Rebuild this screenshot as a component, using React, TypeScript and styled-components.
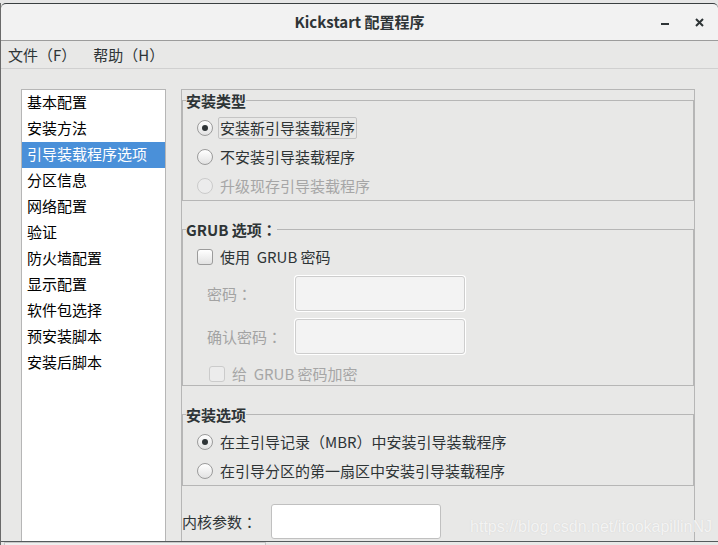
import React from "react";
import styled, { createGlobalStyle } from "styled-components";

const GlobalStyle = createGlobalStyle`
  html, body {
    margin: 0;
    padding: 0;
    background: #e6e6e6;
  }
  body {
    font-family: "Noto Sans CJK SC", "Noto Sans", sans-serif;
    font-size: 15px;
    color: #2e3436;
  }
`;

const Window = styled.div`
  position: relative;
  width: 718px;
  height: 542px;
  margin-top: 3px;
  display: flex;
  flex-direction: column;
  border-left: 1px solid #6a6a6a;
  box-sizing: border-box;
  background: #e8e8e7;
  overflow: hidden;
`;

const TitleBar = styled.div`
  height: 36px;
  display: grid;
  grid-template-columns: 1fr auto 1fr;
  align-items: center;
  background: #f2f2f2;
  border-top: 1px solid #3a3f41;
  border-bottom: 1px solid #9c9c9c;
  border-radius: 5px 5px 0 0;
  flex: none;
`;

const Title = styled.div`
  grid-column: 2;
  font-weight: 700;
  font-size: 15px;
  color: #2e3436;
  line-height: 20px;
`;

const WindowButtons = styled.div`
  grid-column: 3;
  display: flex;
  justify-content: flex-end;
  align-items: center;
  gap: 26px;
  padding-right: 14px;
`;

const MenuBar = styled.div`
  height: 27px;
  display: flex;
  align-items: center;
  gap: 17px;
  padding-left: 7px;
  border-bottom: 1px solid #d0d0d0;
  flex: none;
`;

const MenuItem = styled.span`
  font-size: 15px;
  color: #2e3436;
`;

const Body = styled.div`
  flex: 1;
  display: flex;
  gap: 15px;
  padding: 20px 0 0 20px;
  min-height: 0;
  overflow: hidden;
`;

const NavList = styled.ul`
  list-style: none;
  margin: 0;
  padding: 0;
  width: 145px;
  box-sizing: border-box;
  background: #ffffff;
  border: 1px solid #b6b6b6;
  border-bottom: none;
  flex: none;
`;

const NavItem = styled.li<{ $selected?: boolean }>`
  height: 26px;
  line-height: 24px;
  padding-left: 5px;
  font-size: 15px;
  white-space: nowrap;
  color: ${(p) => (p.$selected ? "#ffffff" : "#000000")};
  background: ${(p) => (p.$selected ? "#4a90d9" : "transparent")};
`;

const Panel = styled.div`
  width: 514px;
  box-sizing: border-box;
  border: 1px solid #b6b6b6;
  border-bottom: none;
  display: flex;
  flex-direction: column;
  flex: none;
`;

const Frame = styled.fieldset<{ $gap?: number; $pad?: number }>`
  margin: ${(p) => p.$gap ?? 0}px 0 0 0;
  padding: ${(p) => p.$pad ?? 2}px 0 0 0;
  border: 1px solid #b6b6b6;
  min-inline-size: 0;
`;

const Legend = styled.legend`
  margin-left: 3px;
  padding: 0;
  font-weight: 700;
  font-size: 15px;
  line-height: 21px;
  color: #2e3436;
`;

/* full-width colon drawn centred, as in the original GTK font */
const Colon = styled.span`
  font-family: "Noto Sans CJK TC", "Noto Sans CJK SC", sans-serif;
`;

const OptionRow = styled.label<{ $height?: number; $indent?: number }>`
  display: flex;
  align-items: center;
  gap: 5px;
  height: ${(p) => p.$height ?? 29}px;
  padding-left: ${(p) => p.$indent ?? 14}px;
`;

const Radio = styled.span<{ $checked?: boolean; $disabled?: boolean }>`
  width: 16px;
  height: 16px;
  box-sizing: border-box;
  border-radius: 50%;
  flex: none;
  display: flex;
  align-items: center;
  justify-content: center;
  border: 1px solid ${(p) => (p.$disabled ? "#cbcbcb" : "#9b9b9b")};
  background: ${(p) =>
    p.$disabled ? "#ececec" : "linear-gradient(#ffffff, #e2e2e2)"};

  &::after {
    content: "";
    width: 6px;
    height: 6px;
    border-radius: 50%;
    background: #2e3436;
    display: ${(p) => (p.$checked ? "block" : "none")};
  }
`;

const Check = styled.span<{ $disabled?: boolean }>`
  width: 16px;
  height: 16px;
  box-sizing: border-box;
  border-radius: 3px;
  flex: none;
  border: 1px solid ${(p) => (p.$disabled ? "#cbcbcb" : "#9b9b9b")};
  background: ${(p) =>
    p.$disabled ? "#ececec" : "linear-gradient(#ffffff, #e2e2e2)"};
`;

const OptionText = styled.span<{ $focused?: boolean; $disabled?: boolean }>`
  padding: 0 1px;
  height: 20px;
  line-height: 20px;
  border: 1px solid ${(p) => (p.$focused ? "#c4c4c4" : "transparent")};
  border-radius: 2px;
  white-space: pre;
  font-size: 15px;
  color: ${(p) => (p.$disabled ? "#a6a6a6" : "#2e3436")};
`;

const FieldGrid = styled.div`
  display: grid;
  grid-template-columns: 88px 170px;
  row-gap: 8px;
  align-items: center;
  padding-left: 24px;
  margin: 5px 0 8px;
`;

const FieldLabel = styled.span<{ $disabled?: boolean }>`
  font-size: 15px;
  color: ${(p) => (p.$disabled ? "#a3a3a3" : "#2e3436")};
`;

const TextBox = styled.div<{ $disabled?: boolean }>`
  width: 170px;
  height: 35px;
  box-sizing: border-box;
  border-radius: 3px;
  border: 1px solid ${(p) => (p.$disabled ? "#cdcdcd" : "#c0c0c0")};
  background: ${(p) => (p.$disabled ? "#f3f3f3" : "#ffffff")};
  box-shadow: ${(p) => (p.$disabled ? "0 0 0 1px #ffffff" : "none")};
`;

const KernelRow = styled.div`
  display: flex;
  align-items: center;
  gap: 14px;
  margin-top: 18px;
`;

const BottomBar = styled.div`
  height: 3px;
  border-top: 1px solid #555a5c;
  flex: none;
  display: flex;
  padding-left: 3px;
`;

const Thumb = styled.div`
  width: 260px;
  border: 1px solid #c8c8c8;
  border-bottom: none;
  background: #efefef;
`;

const Watermark = styled.div`
  position: absolute;
  right: 6px;
  bottom: 9px;
  font-family: "Liberation Sans", Arial, sans-serif;
  font-size: 16px;
  color: rgba(255, 255, 255, 0.75);
  text-shadow: 0 0 1px rgba(160, 160, 160, 0.35);
  pointer-events: none;
`;

const navItems = [
  "基本配置",
  "安装方法",
  "引导装载程序选项",
  "分区信息",
  "网络配置",
  "验证",
  "防火墙配置",
  "显示配置",
  "软件包选择",
  "预安装脚本",
  "安装后脚本",
];

export default function App() {
  return (
    <>
      <GlobalStyle />
      <Window>
        <TitleBar>
          <Title>Kickstart 配置程序</Title>
          <WindowButtons>
            <svg width="8" height="8" viewBox="0 0 8 8">
              <rect x="0" y="5" width="8" height="2" fill="#2e3436" />
            </svg>
            <svg width="9" height="9" viewBox="0 0 9 9">
              <path d="M1 1 L8 8 M8 1 L1 8" stroke="#2e3436" strokeWidth="2" />
            </svg>
          </WindowButtons>
        </TitleBar>
        <MenuBar>
          <MenuItem>文件（F）</MenuItem>
          <MenuItem>帮助（H）</MenuItem>
        </MenuBar>
        <Body>
          <NavList>
            {navItems.map((item, i) => (
              <NavItem key={item} $selected={i === 2}>
                {item}
              </NavItem>
            ))}
          </NavList>
          <Panel>
            <Frame $pad={2}>
              <Legend>安装类型</Legend>
              <OptionRow>
                <Radio $checked />
                <OptionText $focused>安装新引导装载程序</OptionText>
              </OptionRow>
              <OptionRow>
                <Radio />
                <OptionText>不安装引导装载程序</OptionText>
              </OptionRow>
              <OptionRow>
                <Radio $disabled />
                <OptionText $disabled>升级现存引导装载程序</OptionText>
              </OptionRow>
            </Frame>
            <Frame $gap={18} $pad={3}>
              <Legend>
                GRUB 选项<Colon>：</Colon>
              </Legend>
              <OptionRow $height={28}>
                <Check />
                <OptionText>使用  GRUB 密码</OptionText>
              </OptionRow>
              <FieldGrid>
                <FieldLabel $disabled>
                  密码<Colon>：</Colon>
                </FieldLabel>
                <TextBox $disabled />
                <FieldLabel $disabled>
                  确认密码<Colon>：</Colon>
                </FieldLabel>
                <TextBox $disabled />
              </FieldGrid>
              <OptionRow $height={23} $indent={26}>
                <Check $disabled />
                <OptionText $disabled>给  GRUB 密码加密</OptionText>
              </OptionRow>
            </Frame>
            <Frame $gap={18} $pad={2}>
              <Legend>安装选项</Legend>
              <OptionRow>
                <Radio $checked />
                <OptionText>在主引导记录（MBR）中安装引导装载程序</OptionText>
              </OptionRow>
              <OptionRow>
                <Radio />
                <OptionText>在引导分区的第一扇区中安装引导装载程序</OptionText>
              </OptionRow>
            </Frame>
            <KernelRow>
              <FieldLabel>
                内核参数<Colon>：</Colon>
              </FieldLabel>
              <TextBox />
            </KernelRow>
          </Panel>
        </Body>
        <BottomBar>
          <Thumb />
        </BottomBar>
        <Watermark>https://blog.csdn.net/itookapillinNJ</Watermark>
      </Window>
    </>
  );
}
